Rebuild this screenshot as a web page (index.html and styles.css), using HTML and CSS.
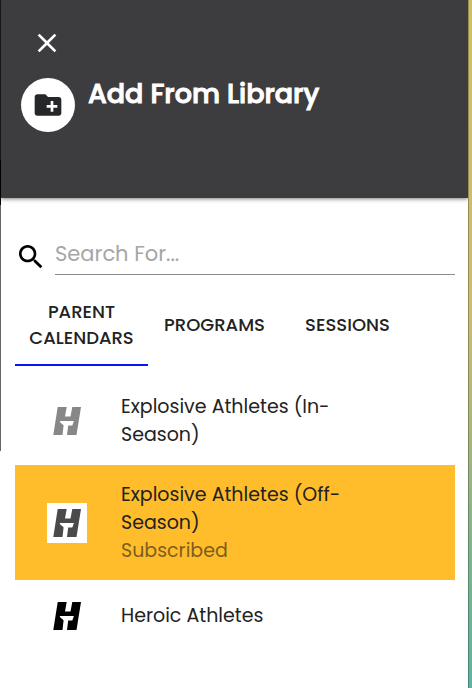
FILE: index.html
```html
<!DOCTYPE html>
<html lang="en">
<head>
    <meta charset="UTF-8">
    <meta name="viewport" content="width=device-width, initial-scale=1.0">
    <title>Add From Library</title>
    <link rel="stylesheet" href="styles.css">
</head>
<body>
    <svg class="symbols" aria-hidden="true">
        <symbol id="logo" viewBox="0 0 28 28">
            <path d="M4.7 0H13.7L12 9.5H17.5L19.3 0H28L23.5 28H14L15.2 18.5H19.3L20.9 14H6.7L7.3 15.5L10.6 18.3L9.5 28H0.3Z"/>
        </symbol>
    </svg>

    <div class="edge-left"></div>

    <main class="drawer">
        <header class="drawer-header">
            <button type="button" class="close-button" aria-label="Close">
                <svg viewBox="0 0 24 24"><path d="M19 6.41 17.59 5 12 10.59 6.41 5 5 6.41 10.59 12 5 17.59 6.41 19 12 13.41 17.59 19 19 17.59 13.41 12z"/></svg>
            </button>
            <div class="title-row">
                <div class="title-icon">
                    <svg viewBox="0 0 24 24"><path d="M20 6h-8l-2-2H4c-1.11 0-1.99.89-1.99 2L2 18c0 1.11.89 2 2 2h16c1.11 0 2-.89 2-2V8c0-1.11-.89-2-2-2zm-1 8h-3v3h-2v-3h-3v-2h3V9h2v3h3v2z"/></svg>
                </div>
                <h1>Add From Library</h1>
            </div>
        </header>

        <div class="content">
            <div class="search">
                <label for="search" aria-label="Search">
                    <svg viewBox="0 0 24 24"><path d="M15.5 14h-.79l-.28-.27C15.41 12.59 16 11.11 16 9.5 16 5.91 13.09 3 9.5 3S3 5.91 3 9.5 5.91 16 9.5 16c1.61 0 3.09-.59 4.23-1.57l.27.28v.79l5 4.99L20.49 19l-4.99-5zm-6 0C7.01 14 5 11.99 5 9.5S7.01 5 9.5 5 14 7.01 14 9.5 11.99 14 9.5 14z"/></svg>
                </label>
                <input type="text" id="search" name="search" placeholder="Search For...">
            </div>

            <div class="tabs" role="tablist">
                <button type="button" class="tab active" role="tab" aria-selected="true">Parent Calendars</button>
                <button type="button" class="tab" role="tab" aria-selected="false">Programs</button>
                <button type="button" class="tab" role="tab" aria-selected="false">Sessions</button>
            </div>

            <ul class="list">
                <li class="item faded">
                    <div class="avatar"><svg><use href="#logo"/></svg></div>
                    <div class="item-text">
                        <p>Explosive Athletes (In-Season)</p>
                    </div>
                </li>
                <li class="item subscribed">
                    <div class="avatar"><svg><use href="#logo"/></svg></div>
                    <div class="item-text">
                        <p>Explosive Athletes (Off-Season)</p>
                        <p class="status">Subscribed</p>
                    </div>
                </li>
                <li class="item">
                    <div class="avatar"><svg><use href="#logo"/></svg></div>
                    <div class="item-text">
                        <p>Heroic Athletes</p>
                    </div>
                </li>
            </ul>
        </div>
    </main>

    <div class="edge-right"></div>
</body>
</html>
```

FILE: styles.css
```css
* {
    box-sizing: border-box;
}

body {
    margin: 0;
    min-height: 100vh;
    display: flex;
    background-color: #fff;
    color: #222;
    font-family: Poppins, Inter, sans-serif;
    font-size: 19px;
    line-height: 28px;
}

button {
    padding: 0;
    border: none;
    background: none;
    color: inherit;
    font-family: inherit;
    cursor: pointer;
}

svg {
    display: block;
    width: 32px;
    height: 32px;
    fill: currentColor;
}

.symbols {
    display: none;
}

/* page behind the drawer */
.edge-left {
    width: 1px;
    height: 451px;
    background: linear-gradient(#1d1d1f 0 160px, #000 160px 205px, #666 205px);
}

.edge-right {
    width: 4px;
    border-left: 1px solid rgba(0, 0, 0, 0.25);
    background: linear-gradient(#cfbd66 0%, #cdbc72 45%, #a9b67c 63%, #7fb58c 80%, #5db3a0 100%);
}

.drawer {
    flex: 1;
    min-width: 0;
}

.drawer-header {
    min-height: 198px;
    padding: 27px 20px;
    background-color: #3d3d3f;
    color: #fff;
    box-shadow: 0 1px 4px rgba(0, 0, 0, 0.5);
}

.close-button {
    display: block;
    margin-left: 10px;
}

.title-row {
    display: flex;
    gap: 13px;
    margin-top: 19px;
}

.title-icon {
    display: flex;
    align-items: center;
    justify-content: center;
    width: 54px;
    height: 54px;
    border-radius: 50%;
    background-color: #fff;
    color: #262729;
}

h1 {
    margin: 0;
    font-size: 27px;
    font-weight: 500;
    line-height: 32px;
    -webkit-text-stroke: 1px currentColor;
}

.content {
    padding: 35px 13px 0 14px;
}

.search {
    display: flex;
    align-items: center;
    gap: 8px;
    color: #000;
}

.search label {
    padding-top: 6px;
}

.search input {
    flex: 1;
    min-width: 0;
    height: 42px;
    padding: 0;
    border: none;
    border-bottom: 1px solid #8c8c8c;
    outline: none;
    background: none;
    color: #222;
    font-family: inherit;
    font-size: 21px;
}

.search input::placeholder {
    color: #a6a6a6;
    opacity: 1;
}

.tabs {
    display: grid;
    grid-template-columns: repeat(3, 1fr);
    margin-top: 10px;
    padding-right: 41px;
}

.tab {
    min-height: 81px;
    padding: 0 12px;
    border-bottom: 2px solid transparent;
    font-size: 18px;
    font-weight: 500;
    line-height: 26px;
    text-transform: uppercase;
}

.tab.active {
    border-bottom-color: #0a14f5;
}

.list {
    margin: 0;
    padding: 11px 0 0;
    list-style: none;
}

.item {
    display: flex;
    align-items: center;
    gap: 34px;
    min-height: 72px;
    padding: 16px 80px 16px 32px;
}

.item p {
    margin: 0;
}

.item.subscribed {
    padding-bottom: 15px;
    background-color: #ffbd2c;
}

.avatar {
    display: flex;
    flex: none;
    align-items: center;
    justify-content: center;
    width: 40px;
    height: 40px;
    background-color: #fff;
    color: #000;
}

.avatar svg {
    width: 28px;
    height: 28px;
}

.faded .avatar {
    color: #878787;
}

.subscribed .avatar {
    color: #4a4a4a;
}

.item .status {
    color: #7d5e1d;
}
```
